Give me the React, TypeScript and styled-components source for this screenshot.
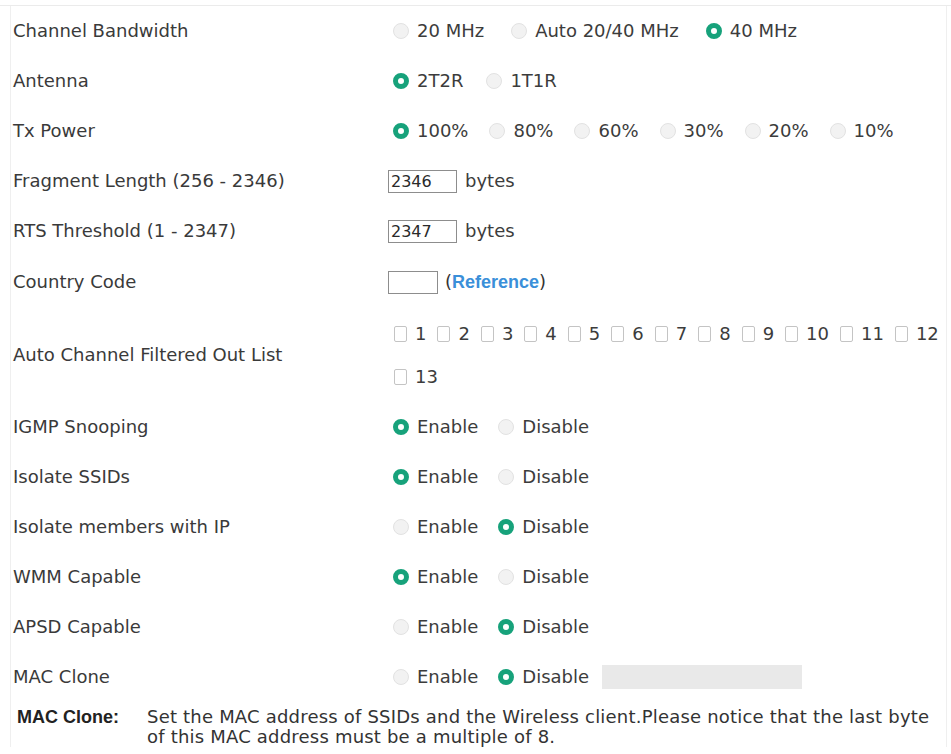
import React from "react";
import styled, { createGlobalStyle } from "styled-components";

const GlobalStyle = createGlobalStyle`
  html, body {
    margin: 0;
    padding: 0;
    background: #ffffff;
  }
  body {
    font-family: "DejaVu Sans", Verdana, sans-serif;
    color: #3a3a3a;
  }
`;

const Page = styled.div`
  padding-top: 5px;
  width: 951px;
`;

const Sheet = styled.div`
  border-top: 1px solid #ebebeb;
`;

const Panel = styled.div`
  margin: 0 4px 0 10px;
  border-left: 1px solid #efefef;
  border-right: 1px solid #efefef;
`;

const Row = styled.div<{ $h?: number }>`
  display: grid;
  grid-template-columns: 377px 1fr;
  align-items: center;
  min-height: ${(p) => p.$h ?? 50}px;
`;

const Label = styled.div`
  padding-left: 2px;
  font-size: 18px;
  line-height: 22px;
  color: #3a3a3a;
  white-space: nowrap;
`;

const Value = styled.div`
  display: flex;
  align-items: center;
  font-size: 18px;
  line-height: 22px;
  color: #3c3c3c;
`;

const Option = styled.label<{ $gap: number }>`
  display: inline-flex;
  align-items: center;
  margin-right: ${(p) => p.$gap}px;
  white-space: nowrap;
`;

const RadioDot = styled.span<{ $on?: boolean }>`
  box-sizing: border-box;
  width: 16px;
  height: 16px;
  border-radius: 50%;
  margin: 0 8px 0 5px;
  flex: none;
  background: ${(p) => (p.$on ? "#ffffff" : "#f2f2f2")};
  border: ${(p) => (p.$on ? "5px solid #17a27b" : "1px solid #e2e2e2")};
`;

const Field = styled.input<{ $w: number }>`
  box-sizing: border-box;
  width: ${(p) => p.$w}px;
  height: 23px;
  margin: 0;
  padding: 0 2px;
  border: 1px solid #8d8d8d;
  border-radius: 0;
  font-family: "DejaVu Sans", Verdana, sans-serif;
  font-size: 16px;
  color: #2a2a2a;
  background: #fff;
  outline: none;
`;

const Unit = styled.span`
  margin-left: 8px;
`;

const RefLink = styled.span`
  margin-left: 7px;
  color: #333;
  b {
    font-family: "Liberation Sans", Arial, sans-serif;
    font-weight: 700;
    color: #3a8fd9;
  }
`;

const ChannelList = styled.div`
  display: flex;
  flex-wrap: wrap;
  row-gap: 21px;
  font-size: 18px;
  line-height: 22px;
  color: #3c3c3c;
`;

const ChannelItem = styled.label`
  display: inline-flex;
  align-items: center;
  margin-right: 5px;
`;

const Box = styled.span`
  box-sizing: border-box;
  width: 13px;
  height: 16px;
  margin: 0 8px 0 6px;
  border: 1px solid #c4c4c4;
  border-radius: 2px;
  background: #fff;
  flex: none;
`;

const MacField = styled.span`
  display: inline-block;
  width: 200px;
  height: 24px;
  margin-left: 13px;
  background: #e9e9e9;
`;

const Help = styled.div`
  display: grid;
  grid-template-columns: 136px 1fr;
  padding-top: 5px;
  font-size: 18px;
  line-height: 20px;
  color: #333;
`;

const HelpTitle = styled.div`
  padding-left: 6px;
  font-family: "Liberation Sans", Arial, sans-serif;
  font-weight: 700;
  color: #222;
`;

const HelpText = styled.div`
  letter-spacing: 0.2px;
`;

type Opt = { text: string; on?: boolean };

const Radios = ({ opts, gap = 15 }: { opts: Opt[]; gap?: number }) => (
  <Value>
    {opts.map((o) => (
      <Option key={o.text} $gap={gap}>
        <RadioDot $on={o.on} />
        {o.text}
      </Option>
    ))}
  </Value>
);

const enable = (on: boolean): Opt[] => [
  { text: "Enable", on },
  { text: "Disable", on: !on },
];

export default function App() {
  const channels = Array.from({ length: 13 }, (_, i) => i + 1);
  return (
    <Page>
      <GlobalStyle />
      <Sheet>
        <Panel>
          <Row>
            <Label>Channel Bandwidth</Label>
            <Radios
              gap={22}
              opts={[
                { text: "20 MHz" },
                { text: "Auto 20/40 MHz" },
                { text: "40 MHz", on: true },
              ]}
            />
          </Row>
          <Row>
            <Label>Antenna</Label>
            <Radios gap={18} opts={[{ text: "2T2R", on: true }, { text: "1T1R" }]} />
          </Row>
          <Row>
            <Label>Tx Power</Label>
            <Radios
              gap={16}
              opts={[
                { text: "100%", on: true },
                { text: "80%" },
                { text: "60%" },
                { text: "30%" },
                { text: "20%" },
                { text: "10%" },
              ]}
            />
          </Row>
          <Row>
            <Label>Fragment Length (256 - 2346)</Label>
            <Value>
              <Field $w={69} defaultValue="2346" />
              <Unit>bytes</Unit>
            </Value>
          </Row>
          <Row>
            <Label>RTS Threshold (1 - 2347)</Label>
            <Value>
              <Field $w={69} defaultValue="2347" />
              <Unit>bytes</Unit>
            </Value>
          </Row>
          <Row $h={52}>
            <Label>Country Code</Label>
            <Value>
              <Field $w={50} defaultValue="" />
              <RefLink>
                (<b>Reference</b>)
              </RefLink>
            </Value>
          </Row>
          <Row $h={94}>
            <Label>Auto Channel Filtered Out List</Label>
            <ChannelList>
              {channels.map((c) => (
                <ChannelItem key={c}>
                  <Box />
                  {c}
                </ChannelItem>
              ))}
            </ChannelList>
          </Row>
          <Row>
            <Label>IGMP Snooping</Label>
            <Radios opts={enable(true)} />
          </Row>
          <Row>
            <Label>Isolate SSIDs</Label>
            <Radios opts={enable(true)} />
          </Row>
          <Row>
            <Label>Isolate members with IP</Label>
            <Radios opts={enable(false)} />
          </Row>
          <Row>
            <Label>WMM Capable</Label>
            <Radios opts={enable(true)} />
          </Row>
          <Row>
            <Label>APSD Capable</Label>
            <Radios opts={enable(false)} />
          </Row>
          <Row>
            <Label>MAC Clone</Label>
            <Value>
              <Option $gap={15}>
                <RadioDot />
                Enable
              </Option>
              <Option $gap={0}>
                <RadioDot $on />
                Disable
              </Option>
              <MacField />
            </Value>
          </Row>
          <Help>
            <HelpTitle>MAC Clone:</HelpTitle>
            <HelpText>
              Set the MAC address of SSIDs and the Wireless client.Please notice that the last byte of
              this MAC address must be a multiple of 8.
            </HelpText>
          </Help>
        </Panel>
      </Sheet>
    </Page>
  );
}
